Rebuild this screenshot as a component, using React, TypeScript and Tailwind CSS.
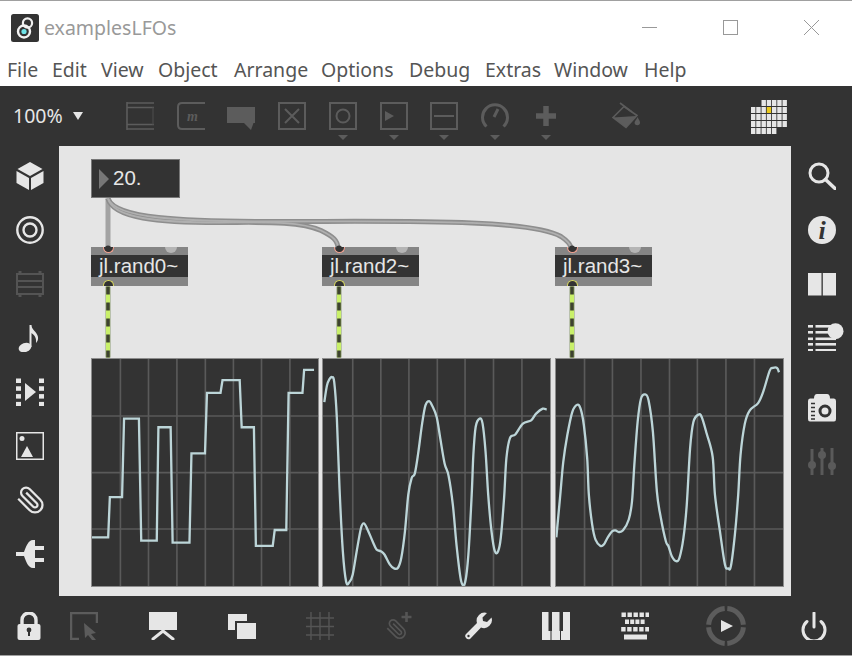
const ON = '#e6e6e6';
const OFF = '#5c5c5c';
const BG = '#333333';

const menus: [string, string][] = [
  ['File', 'w-[45px]'],
  ['Edit', 'w-[49px]'],
  ['View', 'w-[57px]'],
  ['Object', 'w-[76px]'],
  ['Arrange', 'w-[87px]'],
  ['Options', 'w-[88px]'],
  ['Debug', 'w-[76px]'],
  ['Extras', 'w-[69px]'],
  ['Window', 'w-[90px]'],
  ['Help', 'w-[50px]'],
];

function Ico({ children, w = 28, h = 28 }: { children: React.ReactNode; w?: number; h?: number }) {
  return (
    <svg width={w} height={h} viewBox={`0 0 ${w} ${h}`} className="block shrink-0">
      {children}
    </svg>
  );
}

function Caret() {
  return <div className="mt-[5px] w-0 h-0 border-l-[5px] border-r-[5px] border-t-[5px] border-l-transparent border-r-transparent border-t-[#5c5c5c]" />;
}

function ToolSlot({ children, caret, className }: { children: React.ReactNode; caret?: boolean; className: string }) {
  return (
    <div className={`flex flex-col items-center h-[60px] pt-[16px] shrink-0 ${className}`}>
      {children}
      {caret && <Caret />}
    </div>
  );
}

const box = <rect x="1" y="1" width="26" height="26" fill="none" stroke={OFF} strokeWidth="2" />;

function GridIcon() {
  const rows = [
    [2, 3, 4, 5, 6],
    [0, 1, 2, 3, 4, 5, 6],
    [0, 1, 2, 3, 4, 5, 6],
    [0, 1, 2, 3, 4, 5, 6],
    [0, 1, 2, 3, 4],
  ];
  return (
    <Ico w={36} h={34}>
      {rows.map((r, y) =>
        r.map((x) => (
          <rect
            key={`${x}-${y}`}
            x={x * 5.25}
            y={y * 7}
            width="4.4"
            height="6"
            fill={x === 3 && y === 1 ? '#eac91c' : ON}
          />
        )),
      )}
    </Ico>
  );
}

function Toolbar() {
  return (
    <div className="h-[60px] bg-[#333333] flex items-start shrink-0">
      <div className="w-[126px] h-full flex items-center pl-[13px] shrink-0">
        <span className="text-[19.5px] text-[#e6e6e6] leading-none">100%</span>
        <div className="ml-[10px] w-0 h-0 border-l-[5px] border-r-[5px] border-t-[8px] border-l-transparent border-r-transparent border-t-[#e6e6e6]" />
      </div>
      <ToolSlot className="w-[28px]">
        <Ico>
          <path d="M1 0V28M1 1H28M1 5.5H28M1 22.5H28M1 27H28" fill="none" stroke={OFF} strokeWidth="1.6" />
          <path d="M27 5.5V22.5" stroke="#474747" strokeWidth="1.4" />
        </Ico>
      </ToolSlot>
      <ToolSlot className="w-[28px] ml-[23px]">
        <Ico>
          <path d="M28 1H5Q1 1 1 5V23Q1 27 5 27H28" fill="none" stroke={OFF} strokeWidth="2" />
          <text x="10" y="19" fontFamily="Liberation Serif" fontStyle="italic" fontWeight="bold" fontSize="14" fill={OFF}>m</text>
        </Ico>
      </ToolSlot>
      <ToolSlot className="w-[28px] ml-[22px]">
        <Ico>
          <path d="M0 5H28V21H26.5L24 28L17 21H0Z" fill={OFF} />
        </Ico>
      </ToolSlot>
      <ToolSlot className="w-[28px] ml-[23px]">
        <Ico>
          {box}
          <path d="M7 7L21 21M21 7L7 21" stroke={OFF} strokeWidth="2" />
        </Ico>
      </ToolSlot>
      <ToolSlot caret className="w-[28px] ml-[23px]">
        <Ico>
          {box}
          <circle cx="14" cy="14" r="6.5" fill="none" stroke={OFF} strokeWidth="2" />
        </Ico>
      </ToolSlot>
      <ToolSlot caret className="w-[28px] ml-[23px]">
        <Ico>
          {box}
          <path d="M5 9L14 14L5 19Z" fill={OFF} />
        </Ico>
      </ToolSlot>
      <ToolSlot caret className="w-[28px] ml-[22px]">
        <Ico>
          {box}
          <path d="M4 14H24" stroke={OFF} strokeWidth="2" />
        </Ico>
      </ToolSlot>
      <ToolSlot caret className="w-[28px] ml-[23px]">
        <Ico>
          <path d="M5.5 24.5A12.5 12.5 0 1 1 22.5 24.5" fill="none" stroke={OFF} strokeWidth="3" />
          <path d="M13 15L17 7" stroke={OFF} strokeWidth="3" />
        </Ico>
      </ToolSlot>
      <ToolSlot caret className="w-[28px] ml-[23px]">
        <Ico>
          <path d="M14 4V24M4 14H24" stroke={OFF} strokeWidth="5.5" />
        </Ico>
      </ToolSlot>
      <ToolSlot className="w-[28px] ml-[52px]">
        <Ico>
          <path d="M1 15.5L12 4.5L25 13.5L14 25.5Z" fill="none" stroke={OFF} strokeWidth="1.6" />
          <path d="M1 15.5L24.5 14L14 25.5Z" fill={OFF} />
          <path d="M8 1L20 10" stroke={OFF} strokeWidth="1.6" fill="none" />
          <path d="M25.5 15C27 18 28 19 28 20.5A2.7 2.7 0 0 1 22.6 20.5C22.6 19 24.5 18 25.5 15Z" fill={OFF} />
        </Ico>
      </ToolSlot>
      <div className="ml-[111px] pt-[14px] shrink-0">
        <GridIcon />
      </div>
    </div>
  );
}

function Slot({ children, className = '' }: { children: React.ReactNode; className?: string }) {
  return <div className={`h-[54px] flex items-center shrink-0 ${className}`}>{children}</div>;
}

function LeftBar() {
  return (
    <div className="w-[59px] shrink-0 flex flex-col items-center pt-[3px]">
      <Slot>
        <Ico>
          <path d="M14 0L26.5 7L14 14L1.5 7Z" fill={ON} />
          <path d="M0.5 9L13 16V28L0.5 21Z" fill={ON} />
          <path d="M27.5 9L15 16V28L27.5 21Z" fill={ON} />
        </Ico>
      </Slot>
      <Slot>
        <Ico>
          <circle cx="14" cy="14" r="12.7" fill="none" stroke={ON} strokeWidth="2.4" />
          <circle cx="14" cy="14" r="6.5" fill="none" stroke={ON} strokeWidth="2.4" />
        </Ico>
      </Slot>
      <Slot>
        <Ico>
          <rect x="1" y="4" width="26" height="20" fill="none" stroke="#545454" strokeWidth="2" />
          <path d="M1 11H27M1 17H27" stroke="#545454" strokeWidth="2" />
          <path d="M4 1V4M24 24V27M4 24V27M24 1V4" stroke="#545454" strokeWidth="3" />
        </Ico>
      </Slot>
      <Slot>
        <Ico>
          <ellipse cx="9" cy="23.5" rx="6.5" ry="4.5" fill={ON} transform="rotate(-20 9 23.5)" />
          <path d="M14.5 1V23" stroke={ON} strokeWidth="2" />
          <path d="M15 1C16 6 21 8 22 13C22.5 16 21 18 20 19C20.5 14 19 11 15 9Z" fill={ON} />
        </Ico>
      </Slot>
      <Slot>
        <Ico>
          {[0, 1, 2, 3].map((i) => (
            <g key={i} fill={ON}>
              <rect x="0" y={i * 7.8 + 0.5} width="5" height="4.5" />
              <rect x="23" y={i * 7.8 + 0.5} width="5" height="4.5" />
            </g>
          ))}
          <path d="M9 5L20 14L9 23Z" fill={ON} />
        </Ico>
      </Slot>
      <Slot>
        <Ico>
          <rect x="0.75" y="0.75" width="26.5" height="26.5" fill="none" stroke={ON} strokeWidth="1.5" />
          <circle cx="6" cy="6.5" r="2.5" fill={ON} />
          <path d="M3 25L9 14L15 25Z" fill={ON} transform="translate(2 0)" />
        </Ico>
      </Slot>
      <Slot>
        <Ico>
          <g transform="translate(29 -1) scale(-1.25 1.25)">
            <path d="M21.44 11.05l-9.19 9.19a6 6 0 0 1-8.49-8.49l8.57-8.57A4 4 0 1 1 18 8.84l-8.59 8.57a2 2 0 0 1-2.83-2.83l8.49-8.48" fill="none" stroke={ON} strokeWidth="1.8" />
          </g>
        </Ico>
      </Slot>
      <Slot>
        <Ico>
          <path d="M19 0V28H17C12 28 10 21 8 16H0V12H8C10 7 12 0 17 0Z" fill={ON} />
          <rect x="19" y="6" width="9" height="4" fill={ON} />
          <rect x="19" y="18" width="9" height="4" fill={ON} />
        </Ico>
      </Slot>
    </div>
  );
}

function RightBar() {
  return (
    <div className="w-[61px] shrink-0 flex flex-col items-start pl-[17px] pt-[3px]">
      <Slot>
        <Ico>
          <circle cx="11" cy="11" r="9" fill="none" stroke={ON} strokeWidth="3" />
          <path d="M17.5 17.5L27 26.5" stroke={ON} strokeWidth="3.5" strokeLinecap="round" />
        </Ico>
      </Slot>
      <Slot>
        <Ico>
          <circle cx="14" cy="14" r="14" fill={ON} />
          <text x="14" y="23" textAnchor="middle" fontFamily="Liberation Serif" fontStyle="italic" fontWeight="bold" fontSize="26" fill={BG}>i</text>
        </Ico>
      </Slot>
      <Slot>
        <Ico>
          <rect x="0" y="3" width="13.5" height="22.5" fill={ON} />
          <rect x="14.8" y="3" width="13.2" height="22.5" fill={ON} />
        </Ico>
      </Slot>
      <Slot className="-mt-[1px]">
        <Ico w={36} h={28}>
          {[2, 8, 14.5, 20, 26].map((y) => (
            <g key={y} fill={ON}>
              <rect x="0" y={y} width="5" height="2.6" />
              <rect x="7.5" y={y} width="20.5" height="2.6" />
            </g>
          ))}
          <circle cx="27.5" cy="8.2" r="8" fill={ON} />
        </Ico>
      </Slot>
      <Slot className="mt-[17px]">
        <Ico>
          <path d="M6 4.5Q6 0 9 0H19Q22 0 22 4.5H26Q28 4.5 28 7V25Q28 27.5 26 27.5H2Q0 27.5 0 25V7Q0 4.5 2 4.5Z" fill={ON} />
          <circle cx="17" cy="17" r="5" fill="none" stroke={BG} strokeWidth="3" />
          <path d="M3 9.5H7M3 13.5H7M3 17.5H7M3 21.5H7M3 25H7" stroke={BG} strokeWidth="1.5" />
        </Ico>
      </Slot>
      <Slot>
        <Ico>
          <path d="M4 1V27M14 0V27M24 0V27" stroke="#5a5a5a" strokeWidth="3" />
          <circle cx="4" cy="17" r="4" fill="#5a5a5a" />
          <circle cx="14" cy="7" r="4" fill="#5a5a5a" />
          <circle cx="24" cy="18" r="4" fill="#5a5a5a" />
        </Ico>
      </Slot>
    </div>
  );
}

function BottomBar() {
  return (
    <div className="h-[60px] bg-[#333333] border-b border-[#a0a0a0] flex items-center pl-[15px] shrink-0">
      <Ico>
        <path d="M7 13V8A7 7 0 0 1 21 8V13" fill="none" stroke={ON} strokeWidth="3.4" />
        <rect x="2.5" y="12" width="23" height="16" rx="2" fill={ON} />
        <circle cx="14" cy="18" r="2.4" fill={BG} />
        <rect x="13" y="18" width="2" height="6" fill={BG} />
      </Ico>
      <div className="ml-[27px]">
        <Ico>
          <path d="M9 27H1V1H27V11" fill="none" stroke={OFF} strokeWidth="2.5" />
          <path d="M14 11L26 21L21 22L26 28H22L18 23L15 26Z" fill={OFF} />
        </Ico>
      </div>
      <div className="ml-[51px]">
        <Ico>
          <rect x="0" y="0" width="28" height="18" fill={ON} />
          <path d="M14 19L4 27M14 19L24 27" stroke={ON} strokeWidth="3" strokeLinecap="round" />
        </Ico>
      </div>
      <div className="ml-[51px]">
        <Ico>
          <rect x="0" y="2" width="19" height="16" fill={ON} />
          <rect x="7" y="9" width="22" height="18" fill={BG} />
          <rect x="9" y="11" width="19" height="16" fill={ON} />
        </Ico>
      </div>
      <div className="ml-[50px]">
        <Ico>
          <path d="M5 0V28M14 0V28M23 0V28M0 6H28M0 14.5H28M0 23H28" stroke="#555555" strokeWidth="1.4" />
        </Ico>
      </div>
      <div className="ml-[51px]">
        <Ico>
          <g transform="translate(22 6) scale(-0.92 0.92)">
            <path d="M21.44 11.05l-9.19 9.19a6 6 0 0 1-8.49-8.49l8.57-8.57A4 4 0 1 1 18 8.84l-8.59 8.57a2 2 0 0 1-2.83-2.83l8.49-8.48" fill="none" stroke="#555555" strokeWidth="1.8" />
          </g>
          <path d="M21.5 0V10M16.5 5H26.5" stroke="#555555" strokeWidth="2.6" />
        </Ico>
      </div>
      <div className="ml-[51px]">
        <Ico>
          <path d="M23 1A8 8 0 0 0 13 11L2 22A3.2 3.2 0 0 0 6.5 26.5L17 15.5A8 8 0 0 0 27.5 5.5L23 10L19 9L18.5 5.5Z" fill={ON} />
          <circle cx="4.5" cy="24" r="1.2" fill={BG} />
        </Ico>
      </div>
      <div className="ml-[50px]">
        <Ico>
          <rect x="0" y="0" width="28.5" height="28" fill={ON} />
          <rect x="6.5" y="0" width="3.5" height="19" fill={BG} />
          <rect x="17.5" y="0" width="3.5" height="19" fill={BG} />
          <path d="M9 19V28M18.5 19V28" stroke={BG} strokeWidth="1" />
        </Ico>
      </div>
      <div className="ml-[51px]">
        <Ico>
          {[0, 1, 2, 3, 4].map((i) => (
            <rect key={`a${i}`} x={i * 6 + 0.5} y="0.5" width="4.4" height="4.5" fill={ON} />
          ))}
          {[0, 1, 2, 3].map((i) => (
            <rect key={`b${i}`} x={i * 5.2 + 4} y="7.5" width="4" height="4.5" fill={ON} />
          ))}
          {[0, 1, 2, 3, 4].map((i) => (
            <rect key={`c${i}`} x={i * 6 + 0.2} y="15" width="4.4" height="4.5" fill={ON} />
          ))}
          <rect x="3" y="22.5" width="23" height="5" fill={ON} />
        </Ico>
      </div>
      <div className="ml-[57px]">
        <Ico w={40} h={40}>
          <path d="M18.7 2.6A17.5 17.5 0 0 0 2.6 18.7M21.3 2.6A17.5 17.5 0 0 1 37.4 18.7M2.6 21.3A17.5 17.5 0 0 0 18.7 37.4M37.4 21.3A17.5 17.5 0 0 1 21.3 37.4" fill="none" stroke={OFF} strokeWidth="5" />
          <path d="M15 14L27 20L15 26Z" fill={ON} />
        </Ico>
      </div>
      <div className="ml-[54px]">
        <Ico>
          <path d="M14 1V15" stroke={ON} strokeWidth="3" strokeLinecap="round" />
          <path d="M7 9.5A11 11 0 1 0 21 9.5" fill="none" stroke={ON} strokeWidth="3" strokeLinecap="round" />
        </Ico>
      </div>
    </div>
  );
}

// catmull-rom through traced points
function smooth(pts: number[][]) {
  let d = `M${pts[0][0]} ${pts[0][1]}`;
  for (let i = 0; i < pts.length - 1; i++) {
    const p0 = pts[i - 1] || pts[i];
    const p1 = pts[i];
    const p2 = pts[i + 1];
    const p3 = pts[i + 2] || p2;
    const c1 = [p1[0] + (p2[0] - p0[0]) / 6, p1[1] + (p2[1] - p0[1]) / 6];
    const c2 = [p2[0] - (p3[0] - p1[0]) / 6, p2[1] - (p3[1] - p1[1]) / 6];
    d += `C${c1[0]} ${c1[1]} ${c2[0]} ${c2[1]} ${p2[0]} ${p2[1]}`;
  }
  return d;
}

const trace0 =
  'M19 548H68L73 427H110L116 190H161L168 558H215L220 216H257L263 564H314L320 295H361L367 112H408L414 74H466L472 216H509L515 574H566L572 526H607L614 112H656L661 43H691';

const trace2 = smooth([
  [14, 140], [22, 90], [30, 70], [37, 65], [44, 80], [52, 190], [60, 400], [70, 590], [80, 682], [90, 683], [100, 660], [112, 590], [125, 520],
  [134, 506], [145, 525], [160, 560], [172, 585], [185, 590], [196, 600], [212, 630], [225, 642], [237, 640], [247, 610], [258, 530], [268, 420],
  [278, 370], [288, 355], [298, 295], [310, 205], [320, 150], [331, 137], [340, 150], [354, 185], [365, 250], [378, 325], [390, 362], [403, 450],
  [415, 580], [428, 680], [440, 684], [450, 600], [460, 420], [465, 300], [472, 215], [484, 190], [493, 205], [502, 290], [510, 420], [520, 530],
  [530, 590], [540, 590], [548, 550], [558, 430], [565, 310], [576, 248], [592, 238], [615, 205], [640, 195], [655, 175], [675, 160], [687, 163],
]);

const trace3 = smooth([
  [17, 548], [28, 430], [38, 320], [50, 240], [65, 170], [80, 148], [90, 160], [100, 210], [110, 310], [115, 420], [125, 510], [135, 555],
  [150, 574], [160, 570], [172, 548], [185, 530], [195, 527], [205, 532], [218, 527], [235, 495], [245, 440], [252, 330], [262, 200], [272, 130],
  [285, 117], [295, 135], [308, 230], [320, 410], [332, 490], [347, 560], [355, 575], [365, 605], [378, 620], [388, 610], [400, 550], [410, 450],
  [420, 280], [430, 200], [445, 178], [455, 185], [470, 235], [488, 305], [495, 420], [510, 530], [525, 630], [535, 642], [543, 635], [555, 540],
  [565, 420], [572, 300], [585, 205], [600, 165], [625, 143], [640, 110], [660, 45], [670, 37], [682, 37], [688, 50],
]);

function Scope({ className, viewBox, lines, d }: { className: string; viewBox: string; lines: number[]; d: string }) {
  return (
    <div className={`absolute top-[212px] h-[229px] bg-[#333333] border border-[#8c8c8c] ${className}`}>
      <svg viewBox={viewBox} preserveAspectRatio="none" className="block w-full h-full">
        {lines.map((x) => (
          <path key={x} d={`M${x} 0V700`} stroke="#5a5a5a" strokeWidth="5" />
        ))}
        {[182, 353, 523].map((y) => (
          <path key={y} d={`M0 ${y}H800`} stroke="#5a5a5a" strokeWidth="5" />
        ))}
        <path d={d} fill="none" stroke="#bcd5d8" strokeWidth="7" />
      </svg>
    </div>
  );
}

function Obj({ label, className }: { label: string; className: string }) {
  return (
    <div className={`absolute top-[101px] w-[97px] h-[39px] bg-[#858585] pt-[8px] font-['Liberation_Sans',sans-serif] ${className}`}>
      <div className="h-[22px] bg-[#333333] text-[#e6e6e6] text-[20.5px] leading-[22px] pl-[8px]">{label}</div>
      {/* inlet, second inlet, outlet */}
      <div className="absolute left-[11.5px] top-0 w-[11px] h-[6px] rounded-b-full bg-[#333333] border-[1.5px] border-t-0 border-[#f0a090]" />
      <div className="absolute left-[74px] top-0 w-[12px] h-[6px] rounded-b-full bg-[#b5b5b5]" />
      <div className="absolute left-[11.5px] bottom-0 w-[11px] h-[6px] rounded-t-full bg-[#333333] border-[1.5px] border-b-0 border-[#d8d860]" />
    </div>
  );
}

function Canvas() {
  return (
    <div className="relative flex-1 bg-[#e5e5e5] overflow-hidden">
      {/* number box */}
      <div className="absolute left-[32px] top-[13px] w-[89px] h-[39px] bg-[#333333] border border-[#777777] flex items-center font-['Liberation_Sans',sans-serif]">
        <div className="ml-[7px] w-0 h-0 border-t-[10px] border-b-[10px] border-l-[10px] border-t-transparent border-b-transparent border-l-[#777777]" />
        <span className="ml-[4px] text-[20.5px] text-[#e6e6e6]">20.</span>
      </div>
      <Obj label="jl.rand0~" className="left-[32px]" />
      <Obj label="jl.rand2~" className="left-[263px]" />
      <Obj label="jl.rand3~" className="left-[496px]" />
      <Scope className="left-[32px] w-[228px]" viewBox="19 10 684 685" lines={[105, 190, 276, 362, 447, 532, 618]} d={trace0} />
      <Scope className="left-[263px] w-[229px]" viewBox="10 10 687 685" lines={[100, 185, 270, 356, 440, 526, 612]} d={trace2} />
      <Scope className="left-[496px] w-[229px]" viewBox="16 10 684 685" lines={[102, 186, 272, 358, 442, 528, 614]} d={trace3} />
      {/* patch cords */}
      <svg className="absolute inset-0 w-full h-full pointer-events-none" viewBox="0 0 732 449">
        <g fill="none" strokeWidth="5">
          <path d="M49 52V101" stroke="#a3a3a3" />
          <path d="M49 52C54 72 100 76 160 76C200 76 240 74 262 84C274 90 279 94 279 102" stroke="#8e8e8e" />
          <path d="M49 52C56 72 120 75 220 75C340 75 470 72 502 90C508 94 512 98 512 102" stroke="#8e8e8e" />
        </g>
        <g fill="none" strokeWidth="1.8" opacity="0.9">
          <path d="M49 52C54 72 100 76 160 76C200 76 240 74 262 84C274 90 279 94 279 102" stroke="#b4b4b4" />
          <path d="M49 52C56 72 120 75 220 75C340 75 470 72 502 90C508 94 512 98 512 102" stroke="#b4b4b4" />
        </g>
        {[49, 280, 513].map((x) => (
          <g key={x}>
            <path d={`M${x} 140V211`} stroke="#aab59a" strokeWidth="5.5" />
            <path d={`M${x} 140V211`} stroke="#c9f06a" strokeWidth="4" />
            <path d={`M${x} 140V211`} stroke="#3d4230" strokeWidth="3.6" strokeDasharray="8 8" />
          </g>
        ))}
        {[49, 280, 513].map((x) => (
          <circle key={x} cx={x} cy="102" r="3" fill="#333333" />
        ))}
      </svg>
    </div>
  );
}

export default function App() {
  return (
    <div className="w-[852px] h-[656px] bg-white flex flex-col overflow-hidden font-['Noto_Sans',sans-serif]">
      {/* title bar */}
      <div className="h-[54px] border-t border-[#a0a0a0] flex items-center pl-[11px] shrink-0 relative">
        <svg width="28" height="28" viewBox="0 0 28 28" className="block">
          <rect width="28" height="28" rx="2.5" fill="#333333" />
          <circle cx="16.5" cy="9" r="4.6" fill="none" stroke="#f2f2f2" strokeWidth="2.2" />
          <circle cx="13" cy="17.5" r="6" fill="none" stroke="#f2f2f2" strokeWidth="2.4" />
          <circle cx="13" cy="17.5" r="2.6" fill="#6fe3e8" />
        </svg>
        <span className="ml-[5px] text-[19.5px] text-[#999999] leading-none">examplesLFOs</span>
        <div className="ml-auto flex items-center pr-[33px]">
          <svg width="15" height="15" viewBox="0 0 15 15" className="block">
            <path d="M0 7.5H15" stroke="#999999" />
          </svg>
          <svg width="15" height="15" viewBox="0 0 15 15" className="block ml-[66px]">
            <rect x="0.5" y="0.5" width="14" height="14" fill="none" stroke="#999999" />
          </svg>
          <svg width="15" height="15" viewBox="0 0 15 15" className="block ml-[66px]">
            <path d="M0 0L15 15M15 0L0 15" stroke="#999999" />
          </svg>
        </div>
      </div>
      {/* menu */}
      <div className="h-[32px] flex items-start pl-[7px] text-[19.5px] leading-[31px] text-[#555555] shrink-0">
        {menus.map(([m, w]) => (
          <span key={m} className={`${w} shrink-0`}>
            {m}
          </span>
        ))}
      </div>
      <Toolbar />
      <div className="flex-1 flex bg-[#333333] min-h-0">
        <LeftBar />
        <Canvas />
        <RightBar />
      </div>
      <BottomBar />
    </div>
  );
}
